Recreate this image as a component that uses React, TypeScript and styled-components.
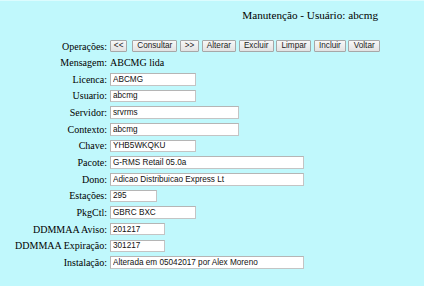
import React from "react";
import styled, { createGlobalStyle } from "styled-components";

const Global = createGlobalStyle`
  html, body {
    margin: 0;
    padding: 0;
    background: #c0f8fc;
  }
  body {
    font-family: "Liberation Serif", "Times New Roman", serif;
    color: #000;
  }
`;

const Page = styled.div`
  min-height: 286px;
  box-sizing: border-box;
  border-top: 1px solid #dcfcfe;
  padding-top: 7.7px;
  width: 424px;
`;

const Header = styled.div`
  width: 378px;
  display: flex;
  justify-content: flex-end;
  font-family: "Liberation Serif", "Times New Roman", serif;
  font-size: 11.2px;
  line-height: 13px;
  white-space: nowrap;
`;

const Form = styled.div`
  margin-top: 16px;
  display: grid;
  grid-template-columns: 107px max-content;
  column-gap: 3px;
  grid-auto-rows: 16.67px;
  align-items: center;
`;

const Label = styled.div`
  justify-self: end;
  font-size: 10px;
  line-height: normal;
  white-space: nowrap;
`;

const Value = styled.div`
  font-size: 10px;
  line-height: normal;
  white-space: nowrap;
`;

const Toolbar = styled.div`
  display: flex;
  align-items: center;
  gap: 2.8px;
`;

const Button = styled.button<{ $w: number; $after?: number }>`
  box-sizing: border-box;
  width: ${(p) => p.$w}px;
  height: 12px;
  margin: 0 ${(p) => p.$after ?? 0}px 0 0;
  padding: 0;
  border: 1px solid #a7a7a7;
  border-radius: 1px;
  background: linear-gradient(#f7f7f7, #e2e2e2);
  font-family: "Liberation Sans", Arial, sans-serif;
  font-size: 8.2px;
  line-height: 10px;
  color: #1c1c1c;
  text-align: center;
  white-space: nowrap;
`;

const Field = styled.input<{ $w: number }>`
  box-sizing: border-box;
  display: block;
  width: ${(p) => p.$w}px;
  height: 12.5px;
  margin: 0;
  padding: 0 0 0 2px;
  border: 1px solid #c4c4c4;
  border-top-color: #b5b5b5;
  border-left-color: #b5b5b5;
  background: #fff;
  font-family: "Liberation Sans", Arial, sans-serif;
  font-size: 8.2px;
  color: #111;
  outline: none;
`;

const buttons: { t: string; w: number; after?: number }[] = [
  { t: "<<", w: 17.3, after: 2.2 },
  { t: "Consultar", w: 45 },
  { t: ">>", w: 19 },
  { t: "Alterar", w: 34 },
  { t: "Excluir", w: 35 },
  { t: "Limpar", w: 35 },
  { t: "Incluir", w: 31.3 },
  { t: "Voltar", w: 31.7 },
];

const fields: { label: string; value: string; w: number }[] = [
  { label: "Licenca:", value: "ABCMG", w: 86 },
  { label: "Usuario:", value: "abcmg", w: 86 },
  { label: "Servidor:", value: "srvrms", w: 129 },
  { label: "Contexto:", value: "abcmg", w: 129 },
  { label: "Chave:", value: "YHB5WKQKU", w: 86 },
  { label: "Pacote:", value: "G-RMS Retail 05.0a", w: 194 },
  { label: "Dono:", value: "Adicao Distribuicao Express Lt", w: 194 },
  { label: "Estações:", value: "295", w: 47 },
  { label: "PkgCtl:", value: "GBRC BXC", w: 86 },
  { label: "DDMMAA Aviso:", value: "201217", w: 55 },
  { label: "DDMMAA Expiração:", value: "301217", w: 55 },
  { label: "Instalação:", value: "Alterada em 05042017 por Alex Moreno", w: 194 },
];

export default function App() {
  return (
    <Page>
      <Global />
      <Header>Manutenção - Usuário: abcmg</Header>
      <Form>
        <Label>Operações:</Label>
        <Toolbar>
          {buttons.map((b) => (
            <Button key={b.t} $w={b.w} $after={b.after}>
              {b.t}
            </Button>
          ))}
        </Toolbar>
        <Label>Mensagem:</Label>
        <Value>ABCMG lida</Value>
        {fields.map((f) => (
          <React.Fragment key={f.label}>
            <Label>{f.label}</Label>
            <div>
              <Field $w={f.w} defaultValue={f.value} readOnly />
            </div>
          </React.Fragment>
        ))}
      </Form>
    </Page>
  );
}
